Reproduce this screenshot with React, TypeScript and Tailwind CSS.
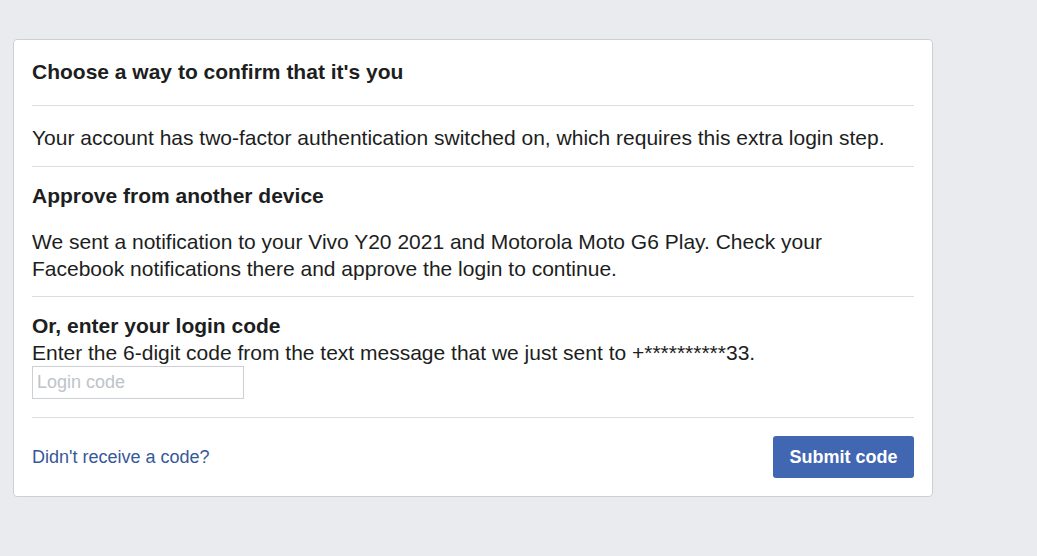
const App = () => {
  return (
    <div className="min-h-[556px] w-full bg-[#e9ebee] pl-[13px] pt-[39px] font-['Liberation_Sans',Arial,sans-serif] text-[#1c1e21]">
      <div className="w-[920px] rounded-[4px] border border-[#ccd0d5] bg-white px-[18px]">
        <div className="pt-[20px] pb-[21px]">
          <h2 className="text-[21px] font-bold leading-[24px]">Choose a way to confirm that it's you</h2>
        </div>
        <div className="border-t border-[#dadde1] pt-[20px] pb-[16px]">
          <p className="text-[21px] leading-[24px]">
            Your account has two-factor authentication switched on, which requires this extra login step.
          </p>
        </div>
        <div className="border-t border-[#dadde1] pt-[17px] pb-[14px]">
          <h3 className="text-[21px] font-bold leading-[24px]">Approve from another device</h3>
          <p className="mt-[20px] text-[21px] leading-[27px]">
            We sent a notification to your Vivo Y20 2021 and Motorola Moto G6 Play. Check your Facebook
            notifications there and approve the login to continue.
          </p>
        </div>
        <div className="border-t border-[#dadde1] pt-[17px] pb-[18px]">
          <h3 className="text-[21px] font-bold leading-[24px]">Or, enter your login code</h3>
          <p className="mt-[3px] text-[21px] leading-[24px]">
            Enter the 6-digit code from the text message that we just sent to +**********33.
          </p>
          <input
            type="text"
            placeholder="Login code"
            className="mt-px h-[33px] w-[212px] border border-[#ccd0d5] px-[4px] text-[18px] outline-none placeholder:text-[#bec3c9]"
          />
        </div>
        <div className="flex items-center justify-between border-t border-[#dadde1] pt-[18px] pb-[18px]">
          <a href="#" className="text-[18px] text-[#365899]">
            Didn't receive a code?
          </a>
          <button className="h-[42px] w-[141px] rounded-[3px] bg-[#4267b2] text-[18px] font-bold text-white">
            Submit code
          </button>
        </div>
      </div>
    </div>
  );
};
export default App;
